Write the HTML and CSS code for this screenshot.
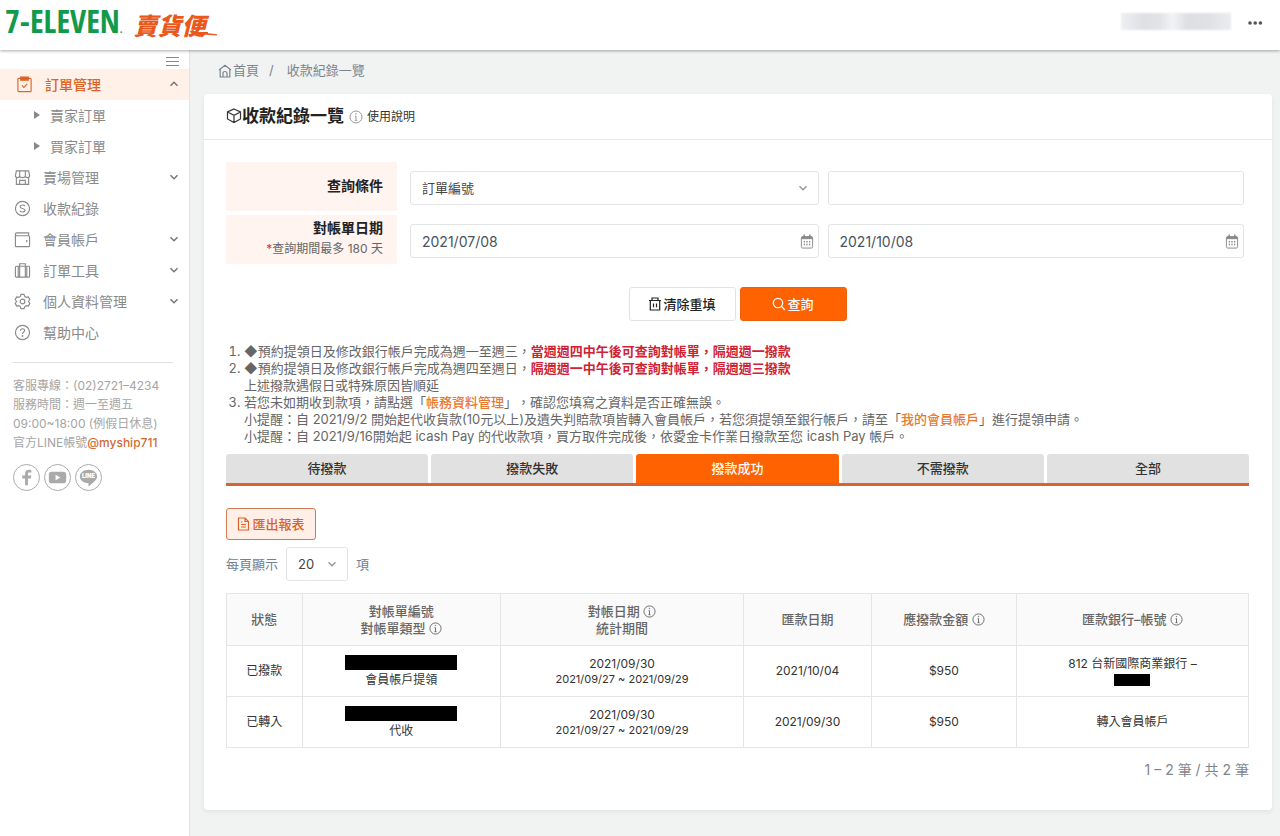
FILE: index.html
```html
<!DOCTYPE html>
<html lang="zh-Hant">
<head>
<meta charset="utf-8">
<meta name="viewport" content="width=device-width, initial-scale=1">
<title>收款紀錄一覽</title>
<link rel="stylesheet" href="styles.css">
</head>
<body>
<svg class="defs" aria-hidden="true">
  <symbol id="down" viewBox="0 0 10 10"><path d="M1.5 3.2 5 6.7l3.5-3.5"/></symbol>
  <symbol id="up" viewBox="0 0 10 10"><path d="M1.5 6.7 5 3.2l3.5 3.5"/></symbol>
  <symbol id="info" viewBox="0 0 14 14"><circle cx="7" cy="7" r="6"/><path d="M7 6v4.500M6 6.200h1M5.900 10.400h2.200"/><circle class="solid" cx="7" cy="3.900" r=".3"/></symbol>
  <symbol id="calendar" viewBox="0 0 14 16"><rect x="1" y="3" width="12" height="12" rx="1.500"/><path d="M1.500 3h11v2h-11z" class="solid"/><path d="M4 .5v3M10 .5v3" stroke-width="1.600"/><path d="M3.500 8.200h7M3.500 11.200h7" stroke-width="1.500" stroke-dasharray="1.400 1.400"/></symbol>
</svg>
<header class="topbar">
  <a class="brand" href="#"><span class="brand-seven">7-ELEVEN<small>.</small></span><span class="brand-ship">賣貨便<svg viewBox="0 0 22 6" width="22" height="6"><path d="M0 1h12v1.300l9 .9v1.300L0 3z"/></svg></span></a>
  <div class="account"><span class="masked" aria-hidden="true"></span>
    <button class="more" aria-label="更多"><svg width="16" height="4" viewBox="0 0 16 4"><circle cx="3" cy="2" r="1.800"/><circle cx="8.200" cy="2" r="1.800"/><circle cx="13.400" cy="2" r="1.800"/></svg></button></div>
</header>
<div class="shell">
  <aside class="sidebar">
    <button class="burger" aria-label="選單"><svg class="line" width="13" height="11" viewBox="0 0 13 11"><path d="M0 1.500h13M0 5.500h13M0 9.500h13"/></svg></button>
    <nav>
      <a class="item active" href="#"><svg class="line nav-icon" viewBox="0 0 18 18"><rect x="2" y="2.500" width="14" height="14" rx="1"/><path class="solid" d="M5 1h8v3.500H5z"/><path d="m6.300 10 2 2 3.600-3.600"/></svg><span>訂單管理</span><svg class="line chev"><use href="#up"/></svg></a>
      <a class="item sub" href="#"><svg class="tri" viewBox="0 0 6 10"><path d="M0 1v8l6-4z"/></svg><span>賣家訂單</span></a>
      <a class="item sub" href="#"><svg class="tri" viewBox="0 0 6 10"><path d="M0 1v8l6-4z"/></svg><span>買家訂單</span></a>
      <a class="item" href="#"><svg class="line nav-icon" viewBox="0 0 18 18"><path d="M2.500 2h13l1 5c0 1.500-1 2.200-2.200 2.200S12.200 8.500 12 7.500c-.2 1-1.500 1.700-3 1.700s-2.800-.7-3-1.700c-.2 1-1.100 1.700-2.300 1.700S1.500 8.500 1.500 7zM2.500 9v7.300h13V9M6 2v5.500M12 2v5.500M6 16.300V12h6v4.300"/></svg><span>賣場管理</span><svg class="line chev"><use href="#down"/></svg></a>
      <a class="item" href="#"><svg class="line nav-icon" viewBox="0 0 18 18"><circle cx="9" cy="9" r="7.500"/><path d="M11.600 6.500C11 5.500 10 5.300 9 5.300c-1.500 0-2.500.7-2.500 1.800 0 2.600 5.200 1.200 5.200 3.800 0 1.100-1.200 1.800-2.700 1.800-1.200 0-2.300-.4-2.800-1.400"/></svg><span>收款紀錄</span></a>
      <a class="item" href="#"><svg class="line nav-icon" viewBox="0 0 18 18"><path d="M15.500 5V2H3a1.500 1.500 0 0 0 0 3h12.500q1 0 1 1v9.500q0 1-1 1h-13q-1 0-1-1v-12M13.500 9.500v2.500"/></svg><span>會員帳戶</span><svg class="line chev"><use href="#down"/></svg></a>
      <a class="item" href="#"><svg class="line nav-icon" viewBox="0 0 18 18"><rect x="1.500" y="4.500" width="15" height="11.500" rx="1"/><path d="M6 16V1.800h6V16M4.500 4.500V16M13.500 4.500V16"/></svg><span>訂單工具</span><svg class="line chev"><use href="#down"/></svg></a>
      <a class="item" href="#"><svg class="line nav-icon" viewBox="0 0 18 18"><path stroke-linejoin="round" d="M7.300 1.500h3.400l.7 2.300 1.400.8 2.300-.5 1.700 2.900L15.200 9l1.600 2-1.700 2.900-2.300-.5-1.400.8-.7 2.300H7.300l-.7-2.300-1.400-.8-2.300.5L1.200 11l1.600-2-1.600-2 1.700-2.900 2.300.5 1.400-.8z"/><circle cx="9" cy="9" r="2.500"/></svg><span>個人資料管理</span><svg class="line chev"><use href="#down"/></svg></a>
      <a class="item" href="#"><svg class="line nav-icon" viewBox="0 0 18 18"><circle cx="9" cy="9" r="7.500"/><path d="M6.800 7.200c0-1.300 1-2.200 2.200-2.200s2.200.8 2.200 2c0 1.600-2.200 1.700-2.200 3.600"/><circle class="solid" cx="9" cy="12.600" r=".4"/></svg><span>幫助中心</span></a>
    </nav>
    <div class="contact">客服專線：(02)2721–4234<br>服務時間：週一至週五<br>09:00~18:00 (例假日休息)<br>官方LINE帳號<a href="#">@myship711</a></div>
    <div class="social">
      <a href="#" aria-label="Facebook"><svg viewBox="0 0 26 26"><path d="M14.500 21v-7h3l.5-3h-3.500V9.300c0-1 .5-1.500 1.600-1.500H18V5.200C17.500 5 16.500 5 15.500 5 12.800 5 11.500 6.500 11.500 9v2H8.500v3h3v7z"/></svg></a>
      <a href="#" aria-label="YouTube"><svg viewBox="0 0 26 26"><path fill-rule="evenodd" d="M7 7h12q3 0 3 3v6q0 3-3 3H7q-3 0-3-3v-6q0-3 3-3zm4 3.200v5.600l5-2.800z"/></svg></a>
      <a href="#" aria-label="LINE"><svg viewBox="0 0 26 26"><path d="M13 5c5 0 9 3 9 7 0 3-3 5.500-8.500 10-.8.500-.5-1-.5-3C8 19 4 16 4 12s4-7 9-7z"/><text x="13" y="14" text-anchor="middle">LINE</text></svg></a>
    </div>
  </aside>
  <main>
    <nav class="crumbs"><a href="#"><svg class="line" width="14" height="14" viewBox="0 0 14 14"><path d="M1 6 7 1.200 13 6M2.200 5v8h9.600V5M5 13V9.500Q5 7.500 7 7.500T9 9.500V13"/></svg>首頁</a><span>/</span><span>收款紀錄一覽</span></nav>
    <section class="card">
      <header class="card-head"><svg class="line" width="16" height="16" viewBox="0 0 16 16"><path d="m8 1 6.500 3v7L8 14.500 1.500 11V4zM1.500 4 8 7.300 14.500 4M8 7.300v7.200"/></svg><h1>收款紀錄一覽</h1><a href="#"><svg class="line" width="14" height="14"><use href="#info"/></svg>使用說明</a></header>
      <div class="card-body">
        <form>
          <div class="fields">
            <label class="field-name" for="cond">查詢條件</label>
            <div class="control"><select id="cond"><option>訂單編號</option></select><svg class="line chev"><use href="#down"/></svg></div>
            <div class="control"><input type="text" aria-label="查詢內容"></div>
            <label class="field-name" for="from">對帳單日期<small><em>*</em>查詢期間最多 180 天</small></label>
            <div class="control"><input id="from" type="text" value="2021/07/08"><svg class="line cal"><use href="#calendar"/></svg></div>
            <div class="control"><input type="text" aria-label="結束日期" value="2021/10/08"><svg class="line cal"><use href="#calendar"/></svg></div>
          </div>
          <div class="actions">
            <button type="reset" class="btn"><svg class="line" width="14" height="14" viewBox="0 0 14 14"><path d="M1 3.500h12M4 3.500V1h6v2.500M2.300 3.500V13h9.400V3.500M5.500 6.500v3.700M8.500 6.500v3.700"/></svg>清除重填</button>
            <button type="button" class="btn primary"><svg class="line" width="14" height="14" viewBox="0 0 14 14"><circle cx="6" cy="6" r="4.700"/><path d="m9.500 9.500 3.500 3.500"/></svg>查詢</button>
          </div>
        </form>
        <ol class="notes">
          <li>◆預約提領日及修改銀行帳戶完成為週一至週三，<strong>當週週四中午後可查詢對帳單，隔週週一撥款</strong></li>
          <li>◆預約提領日及修改銀行帳戶完成為週四至週日，<strong>隔週週一中午後可查詢對帳單，隔週週三撥款</strong><br>上述撥款遇假日或特殊原因皆順延</li>
          <li>若您未如期收到款項，請點選「<a href="#">帳務資料管理</a>」，確認您填寫之資料是否正確無誤。<br>小提醒：自 2021/9/2 開始起代收貨款(10元以上)及遺失判賠款項皆轉入會員帳戶，若您須提領至銀行帳戶，請至「<a href="#">我的會員帳戶</a>」進行提領申請。<br>小提醒：自 2021/9/16開始起 icash Pay 的代收款項，買方取件完成後，依愛金卡作業日撥款至您 icash Pay 帳戶。</li>
        </ol>
        <div class="tabs">
          <button>待撥款</button><button>撥款失敗</button><button class="on">撥款成功</button><button>不需撥款</button><button>全部</button>
        </div>
        <button class="export"><svg class="line" width="13" height="14" viewBox="0 0 13 14"><path d="M1.500 1h6.500l3.500 3.500V13h-10zM8 1v3.500h3.500M4 7.500h5M4 10h5M4 5h1.500"/></svg>匯出報表</button>
        <div class="page-size"><label for="size">每頁顯示</label><div class="control"><select id="size"><option>20</option></select><svg class="line chev"><use href="#down"/></svg></div><span>項</span></div>
        <table>
          <colgroup><col class="c-state"><col class="c-no"><col class="c-period"><col class="c-date"><col class="c-sum"><col class="c-bank"></colgroup>
          <thead><tr><th>狀態</th><th>對帳單編號<br>對帳單類型 <svg class="line tip"><use href="#info"/></svg></th><th>對帳日期 <svg class="line tip"><use href="#info"/></svg><br>統計期間</th><th>匯款日期</th><th>應撥款金額 <svg class="line tip"><use href="#info"/></svg></th><th>匯款銀行–帳號 <svg class="line tip"><use href="#info"/></svg></th></tr></thead>
          <tbody>
            <tr><td>已撥款</td><td><span class="redact"></span>會員帳戶提領</td><td>2021/09/30<small>2021/09/27 ~ 2021/09/29</small></td><td>2021/10/04</td><td>$950</td><td>812 台新國際商業銀行 –<span class="redact short"></span></td></tr>
            <tr><td>已轉入</td><td><span class="redact"></span>代收</td><td>2021/09/30<small>2021/09/27 ~ 2021/09/29</small></td><td>2021/09/30</td><td>$950</td><td>轉入會員帳戶</td></tr>
          </tbody>
        </table>
        <p class="count">1 – 2 筆 / 共 2 筆</p>
      </div>
    </section>
  </main>
</div>
</body>
</html>
```
FILE: styles.css
```css
* { box-sizing: border-box; }
body {
  margin: 0;
  min-height: 100vh;
  display: flex;
  flex-direction: column;
  background: #f0f3f2;
  color: #444;
  font: 13px/17px Inter, "Noto Sans CJK TC", sans-serif;
  text-spacing-trim: space-all;
}
a { color: inherit; text-decoration: none; }
button, input, select { font: inherit; color: inherit; }
button { cursor: pointer; }
.defs { position: absolute; width: 0; height: 0; }
.line { fill: none; stroke: currentColor; stroke-width: 1.2; flex: none; }
.solid { fill: currentColor; }

.topbar {
  height: 50px;
  padding: 0 17px 0 5px;
  display: flex;
  align-items: center;
  justify-content: space-between;
  background: #fff;
  box-shadow: 0 1px 3px #0005;
  z-index: 1;
}
.brand { display: flex; align-items: center; gap: 11px; white-space: nowrap; }
.brand-seven { color: #12994a; font: 900 32px/40px "Liberation Sans Narrow", "Open Sans Condensed", Lato, sans-serif; }
.brand-seven small { font-size: 10px; }
.brand-ship { display: flex; align-items: flex-end; color: #e9591c; font: italic 900 24px/30px "Noto Sans CJK TC", sans-serif; }
.brand-ship svg { fill: currentColor; margin: 0 0 3px -10px; }
.account { display: flex; align-items: center; gap: 16px; padding-bottom: 6px; }
.masked {
  width: 110px;
  height: 17px;
  margin-bottom: 2px;
  background: linear-gradient(90deg, #eeeff1, #dfe0e5 20%, #e2e3e7 35%, #f3f3f5 47%, #dddfe4 60%, #dfe1e5 80%, #ececf0);
  filter: blur(1px);
}
.more { border: 0; padding: 0; background: none; line-height: 0; }
.more svg { fill: #555; }

.shell { flex: 1; display: flex; }
.sidebar { flex: 0 0 190px; background: #fff; border-right: 1px solid #e2e4e4; color: #8a8a8a; }
.burger { display: flex; width: 100%; height: 19px; align-items: center; justify-content: flex-end; padding: 3px 10px 0 0; border: 0; background: none; color: #888; }
.item { display: flex; align-items: center; height: 31px; padding: 0 10px 1px 14px; gap: 12px; font-size: 14px; }
.item.active { color: #dc6426; background: #fff1e8; font-weight: 500; padding-left: 16px; }
.item.sub { padding-left: 34px; gap: 10px; }
.nav-icon { width: 17px; height: 17px; }
.chev { width: 10px; height: 10px; stroke-width: 1.5; }
.item .chev { margin-left: auto; color: #777; }
.tri { width: 6px; height: 10px; fill: #888; }
.contact { margin: 14px 16px 0 13px; padding-top: 13px; border-top: 1px solid #ddd; color: #a5a5a5; font-size: 12px; line-height: 19px; white-space: nowrap; }
.contact a { color: #d06a35; font-weight: 500; }
.social { display: flex; gap: 4px; padding: 12px 13px; }
.social a { width: 27px; height: 27px; border: 1px solid #aaa; border-radius: 50%; }
.social svg { display: block; width: 25px; height: 25px; fill: #aaa; }
.social text { font: 900 6px Inter, sans-serif; fill: #fff; }

main { flex: 1; min-width: 0; padding: 12px 8px 26px 14px; }
.crumbs { display: flex; padding-left: 14px; color: #7d858c; line-height: 17px; margin-bottom: 15px; }
.crumbs a { display: flex; align-items: center; gap: 1px; }
.crumbs span { margin-left: 10px; }
.crumbs span:last-child { margin-left: 13px; }
.card { background: #fff; border-radius: 4px; box-shadow: 0 2px 5px #0001; }
.card-head { display: flex; align-items: center; height: 46px; padding: 0 0 2px 22px; border-bottom: 1px solid #e8e8e8; color: #333; }
.card-head h1 { margin: 0; font-size: 17px; line-height: 24px; font-weight: 600; color: #222; }
.card-head a { display: flex; align-items: center; gap: 4px; margin-left: 5px; padding-top: 2px; font-size: 12px; }
.card-head a svg { color: #999; stroke-width: 1; }
.card-body { padding: 22px 23px 32px 22px; }

.fields { display: grid; grid-template-columns: 171px minmax(0, 422fr) minmax(0, 426fr); gap: 4px 0; padding-right: 5px; }
.field-name { display: flex; flex-direction: column; justify-content: center; align-items: flex-end; height: 49px; padding: 0 14px 2px 0; background: #fff4f0; color: #222; font-size: 14px; line-height: 20px; font-weight: 600; }
.field-name small { color: #666; font-size: 12px; line-height: 22px; font-weight: 400; }
.field-name em { color: #d9303e; font-style: normal; }
.control { position: relative; display: flex; align-items: center; }
.fields .control { padding: 3px 0 0 9px; }
.fields .field-name + .control { padding-left: 13px; }
.control input, .control select { width: 100%; height: 34px; border: 1px solid #e2e4e6; border-radius: 3px; background: #fff; padding: 0 11px; appearance: none; }
.control input { color: #465463; font-size: 14px; }
.control .chev { position: absolute; right: 11px; color: #999; }
.cal { position: absolute; right: 5px; width: 14px; height: 15px; color: #888; stroke-width: 1; }
.actions { display: flex; justify-content: center; gap: 4px; padding: 23px 0 22px; }
.btn { display: flex; align-items: center; justify-content: center; gap: 1px; width: 107px; height: 34px; border: 1px solid #e2e2e2; border-radius: 3px; background: #fff; color: #222; font-weight: 500; }
.btn.primary { background: #ff6200; border-color: #ee6010; color: #fff; }

.notes { margin: 0; padding-left: 18px; color: #666; }
.notes strong { color: #cf2233; font-weight: 600; }
.notes a { color: #e87832; font-weight: 500; }
.tabs { display: flex; gap: 3px; margin-top: 9px; border-bottom: 3px solid #d8632b; }
.tabs button { flex: 1; height: 29px; border: 0; border-radius: 3px 3px 0 0; background: #e1e1e1; color: #333; font-weight: 500; }
.tabs .on { background: #ff6200; color: #fff; }
.export { display: flex; align-items: center; justify-content: center; gap: 2px; width: 90px; height: 32px; margin: 22px 0 7px; padding: 0; border: 1px solid #cc7a50; border-radius: 3px; background: #ffefe7; color: #db6228; font-weight: 500; }
.page-size { display: flex; align-items: center; gap: 8px; margin-bottom: 12px; color: #718096; }
.page-size .control { width: 62px; color: #444; }
table { width: 100%; table-layout: fixed; border-collapse: collapse; text-align: center; color: #333; font-size: 12px; line-height: 16px; }
.c-state { width: 7.4%; } .c-no { width: 19.4%; } .c-period { width: 23.8%; } .c-date { width: 12.5%; } .c-sum { width: 14.2%; }
th, td { padding: 0; border: 1px solid #e5e5e5; }
th { height: 52px; background: #fafafa; color: #666; font-size: 13px; line-height: 17px; font-weight: 500; }
td { height: 51px; }
td small { display: block; font-size: 11px; line-height: 14px; }
.tip { width: 13px; height: 13px; stroke-width: 1; vertical-align: -2px; }
.redact { display: block; width: 112px; height: 15px; margin: 0 auto 2px; background: #000; }
.redact.short { width: 36px; height: 12px; margin: 2px auto 0; }
.count { margin: 13px 0 0; text-align: right; color: #7d858c; font-size: 14px; }
```
